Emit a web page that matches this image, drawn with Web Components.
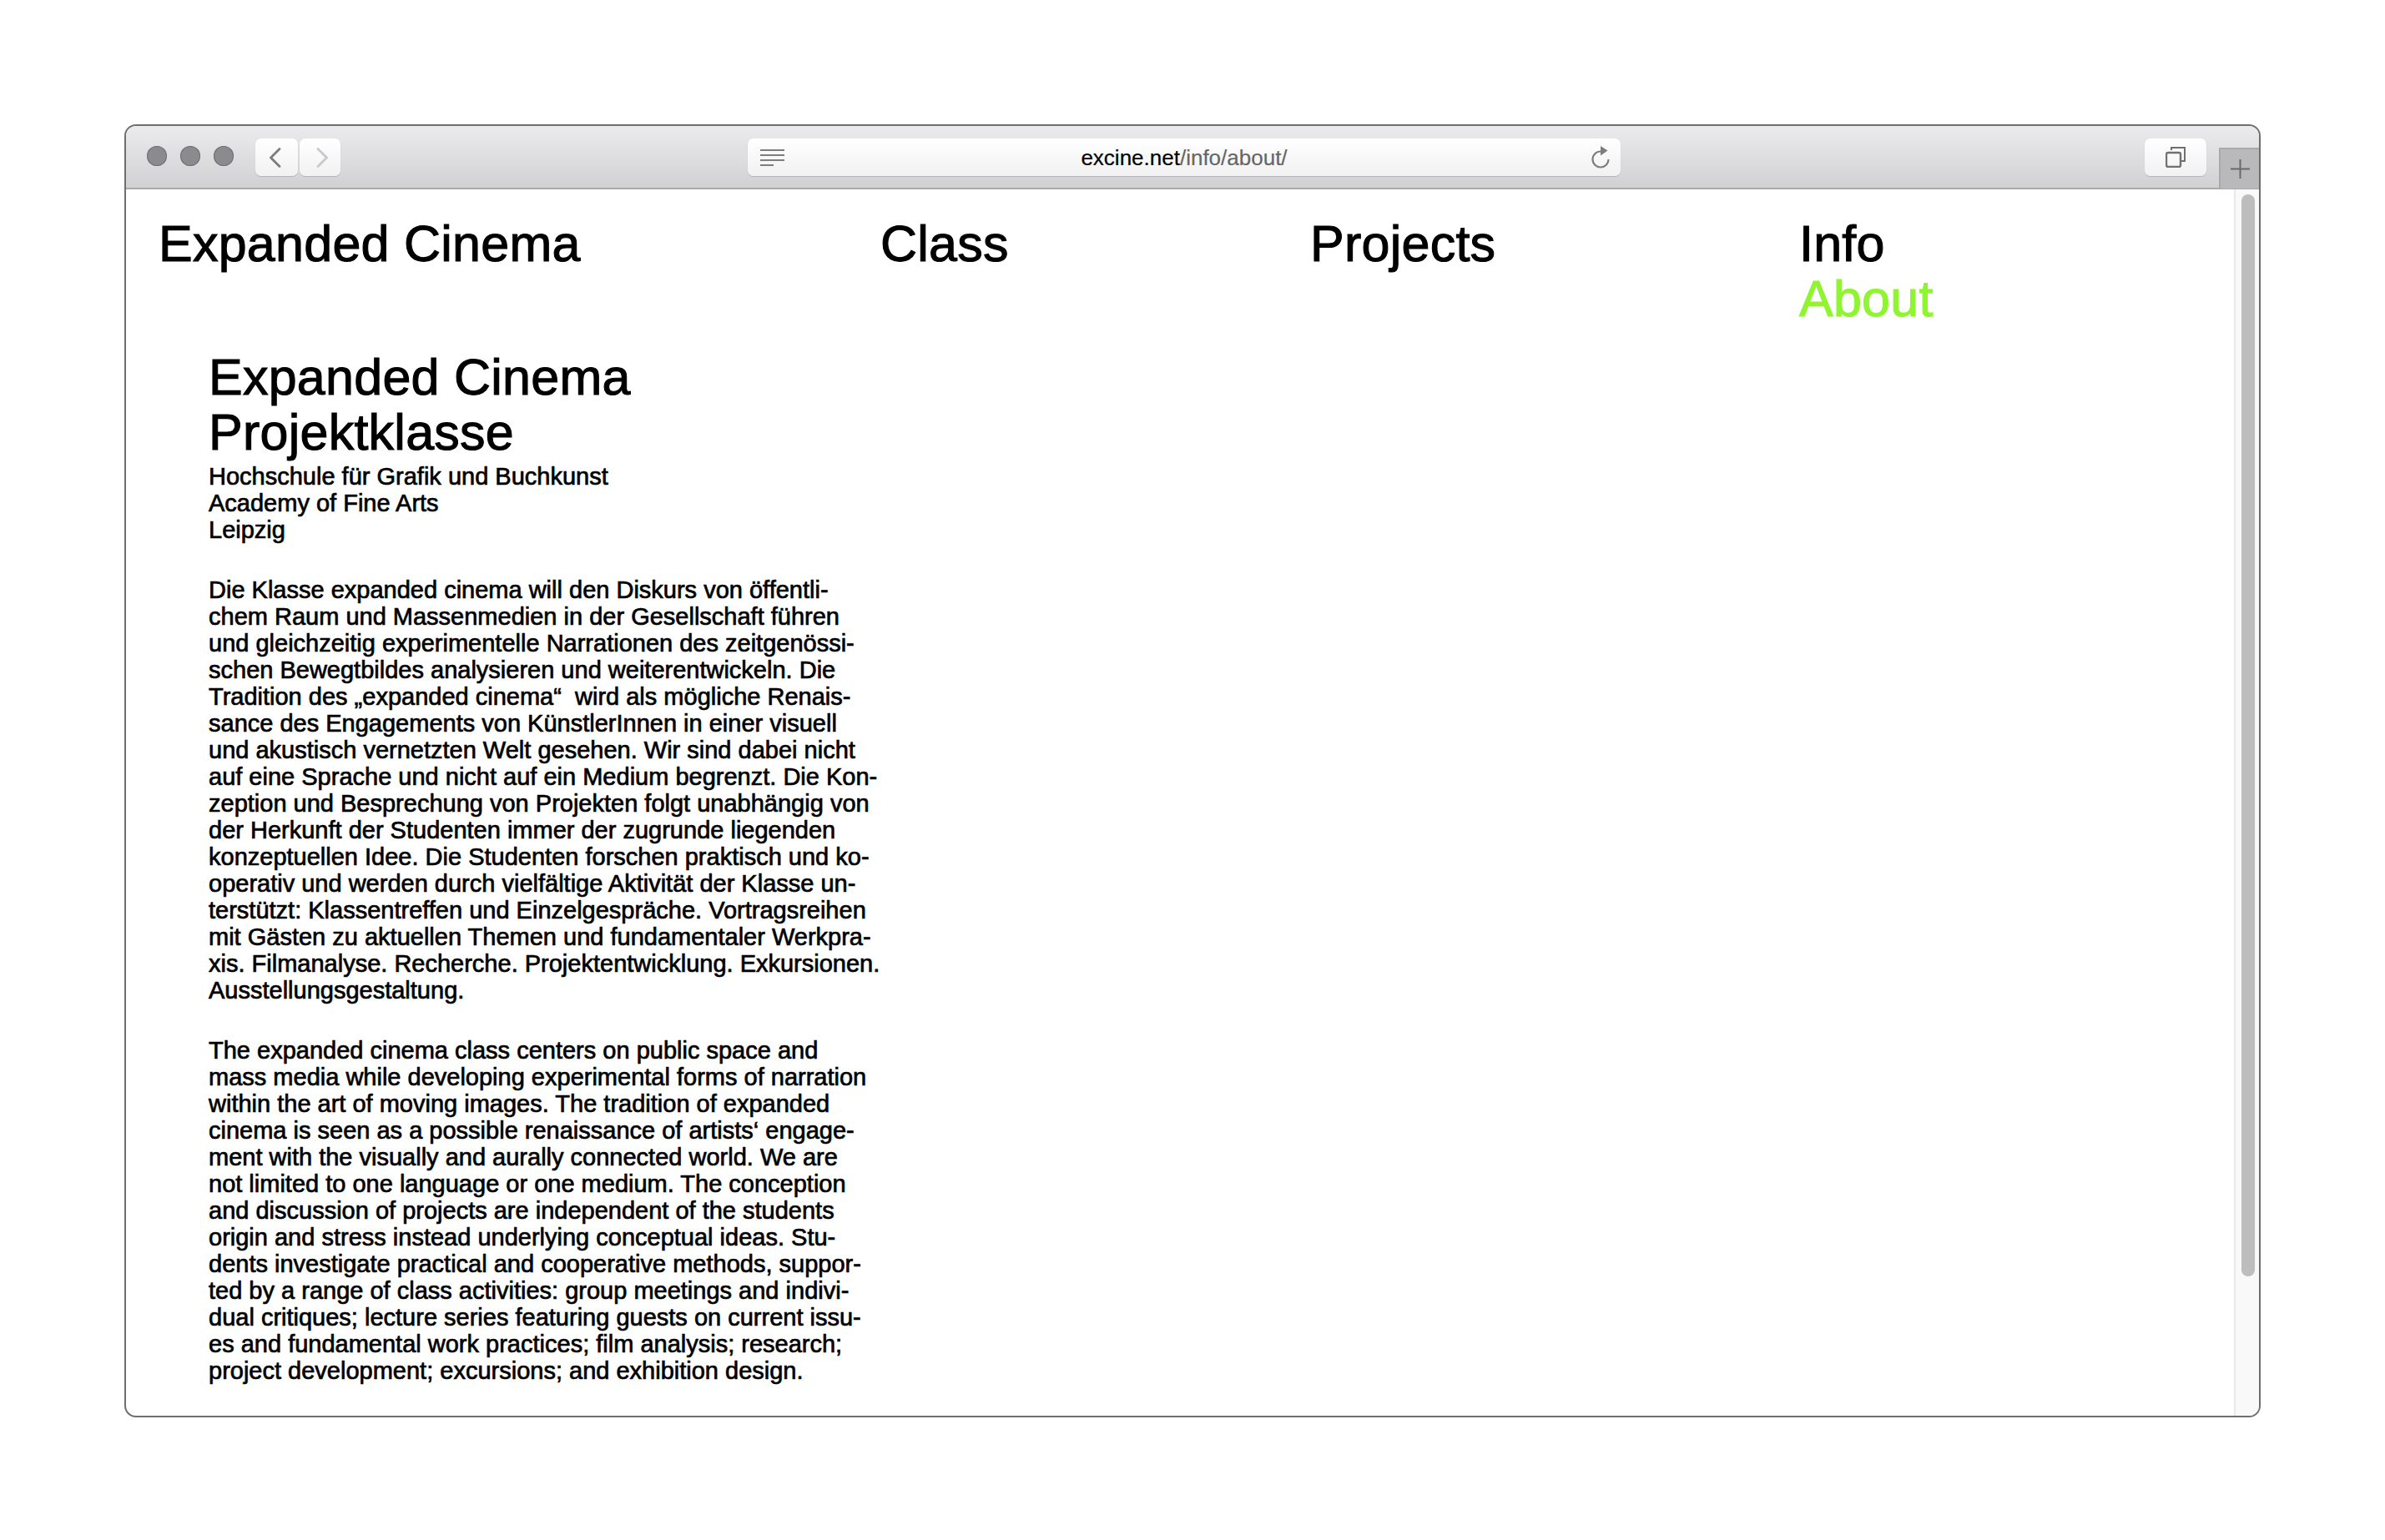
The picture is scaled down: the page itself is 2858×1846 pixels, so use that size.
<!DOCTYPE html>
<html lang="de">
<head>
<meta charset="utf-8">
<title>Expanded Cinema</title>
<style>
html, body { margin: 0; background: #fff; }
body { padding: 149px 0 0 149px; font-family: "Liberation Sans", Arial, sans-serif; color: #000; }
</style>
</head>
<body>

<browser-window>
    <browser-toolbar slot="toolbar" host-name="excine.net" path="/info/about/"></browser-toolbar>

    <site-nav>
        <nav-column width="865">Expanded Cinema</nav-column>
        <nav-column width="515">Class</nav-column>
        <nav-column width="586">Projects</nav-column>
        <nav-column>Info<span slot="sub">About</span></nav-column>
    </site-nav>

    <about-page>
        <span slot="title">Expanded Cinema<br>Projektklasse</span>
        <span slot="subtitle">Hochschule für Grafik und Buchkunst<br>Academy of Fine Arts<br>Leipzig</span>
        <text-block>Die Klasse expanded cinema will den Diskurs von öffentli-<br>chem Raum und Massenmedien in der Gesellschaft führen<br>und gleichzeitig experimentelle Narrationen des zeitgenössi-<br>schen Bewegtbildes analysieren und weiterentwickeln. Die<br>Tradition des „expanded cinema“&nbsp; wird als mögliche Renais-<br>sance des Engagements von KünstlerInnen in einer visuell<br>und akustisch vernetzten Welt gesehen. Wir sind dabei nicht<br>auf eine Sprache und nicht auf ein Medium begrenzt. Die Kon-<br>zeption und Besprechung von Projekten folgt unabhängig von<br>der Herkunft der Studenten immer der zugrunde liegenden<br>konzeptuellen Idee. Die Studenten forschen praktisch und ko-<br>operativ und werden durch vielfältige Aktivität der Klasse un-<br>terstützt: Klassentreffen und Einzelgespräche. Vortragsreihen<br>mit Gästen zu aktuellen Themen und fundamentaler Werkpra-<br>xis. Filmanalyse. Recherche. Projektentwicklung. Exkursionen.<br>Ausstellungsgestaltung.</text-block>
        <text-block>The expanded cinema class centers on public space and<br>mass media while developing experimental forms of narration<br>within the art of moving images. The tradition of expanded<br>cinema is seen as a possible renaissance of artists‘ engage-<br>ment with the visually and aurally connected world. We are<br>not limited to one language or one medium. The conception<br>and discussion of projects are independent of the students<br>origin and stress instead underlying conceptual ideas. Stu-<br>dents investigate practical and cooperative methods, suppor-<br>ted by a range of class activities: group meetings and indivi-<br>dual critiques; lecture series featuring guests on current issu-<br>es and fundamental work practices; film analysis; research;<br>project development; excursions; and exhibition design.</text-block>
    </about-page>
</browser-window>

<script>
class BrowserWindow extends HTMLElement {
    constructor() {
        super();
        this.attachShadow({ mode: 'open' });
        this.shadowRoot.innerHTML = /*html*/`
            <style>
            * { box-sizing: border-box; }
            :host {
                display: flex;
                flex-direction: column;
                box-sizing: border-box;
                width: 2560px;
                height: 1550px;
                border: 2px solid #6e6e6e;
                border-radius: 14px;
                overflow: hidden;
                background: #fff;
            }
            #body {
                flex: 1;
                display: flex;
                min-height: 0;
            }
            #content {
                flex: 1;
                min-width: 0;
            }
            #track {
                position: relative;
                width: 30px;
                background: #f9f9f9;
                border-left: 2px solid #e9e9e9;
            }
            #thumb {
                position: absolute;
                left: 7px;
                top: 6px;
                width: 16px;
                height: 1297px;
                border-radius: 8px;
                background: #bdbdbd;
            }
            </style>
            <slot name="toolbar"></slot>
            <div id="body">
                <div id="content"><slot></slot></div>
                <div id="track"><div id="thumb"></div></div>
            </div>
        `;
    }
}

class BrowserToolbar extends HTMLElement {
    constructor() {
        super();
        this.attachShadow({ mode: 'open' });
        this.shadowRoot.innerHTML = /*html*/`
            <style>
            * { box-sizing: border-box; }
            :host {
                display: flex;
                align-items: flex-start;
                box-sizing: border-box;
                height: 76px;
                padding: 15px 0 0 25px;
                background: linear-gradient(#ebeaec, #d1d0d2);
                border-bottom: 2px solid #a9a8aa;
            }
            #dots { display: flex; gap: 16px; margin-top: 9px; }
            #dots i { width: 24px; height: 24px; border-radius: 50%; background: #8b8a8f; box-shadow: inset 0 0 0 1px #6f6e73; }
            .btn {
                display: flex;
                align-items: center;
                justify-content: center;
                height: 45px;
                background: linear-gradient(#ffffff, #f1f1f2);
                border-radius: 7px;
                box-shadow: 0 1px 1px #b4b3b5;
            }
            #nav { display: flex; gap: 2px; margin-left: 26px; }
            #back { width: 51px; padding-right: 5px; }
            #forward { width: 49px; padding-left: 5px; }
            #address {
                position: relative;
                display: flex;
                align-items: center;
                justify-content: center;
                width: 1046px;
                margin-left: 488px;
                font-size: 26px;
                color: #000;
                padding-top: 2px;
                -webkit-text-stroke: 0.2px currentColor;
            }
            #address span { color: #666; }
            #list { position: absolute; left: 15px; top: 13px; }
            #reload { position: absolute; right: 12px; top: 8px; }
            #tabs { width: 74px; margin-left: 628px; }
            #plus {
                display: flex;
                align-items: center;
                justify-content: center;
                width: 48px;
                height: 49px;
                margin: 11px 0 0 15px;
                background: #b9b8ba;
                border: 2px solid #a9a8aa;
                border-width: 2px 0 0 2px;
            }
            </style>
            <div id="dots"><i></i><i></i><i></i></div>
            <div id="nav">
                <div id="back" class="btn"><svg width="15" height="24" viewBox="0 0 15 24"><path d="M13 1.5 2.5 12 13 22.5" fill="none" stroke="#7d7d7f" stroke-width="2.8" stroke-linecap="round" stroke-linejoin="round"/></svg></div>
                <div id="forward" class="btn"><svg width="15" height="24" viewBox="0 0 15 24"><path d="M2 1.5 12.5 12 2 22.5" fill="none" stroke="#c9c9ca" stroke-width="2.8" stroke-linecap="round" stroke-linejoin="round"/></svg></div>
            </div>
            <div id="address" class="btn">
                <svg id="list" width="29" height="20" viewBox="0 0 29 20"><path d="M0 1h29M0 7h29M0 13h29M0 19h16" stroke="#7d7d7f" stroke-width="2"/></svg>
                <div id="url"></div>
                <svg id="reload" width="24" height="30" viewBox="0 0 24 30"><path d="M12 7.5A9.5 9.5 0 1 0 21.5 17" fill="none" stroke="#7d7d7f" stroke-width="2.2"/><path d="M12 1l8.5 5.5L12 12.5z" fill="#7d7d7f"/></svg>
            </div>
            <div id="tabs" class="btn">
                <svg width="24" height="25" viewBox="0 0 24 25"><path d="M7 4V1h16v16h-4" fill="none" stroke="#707072" stroke-width="2"/><rect x="1" y="7" width="17" height="17" rx="2" fill="none" stroke="#707072" stroke-width="2.4"/></svg>
            </div>
            <div id="plus"><svg width="23" height="23" viewBox="0 0 23 23"><path d="M11.5 0v23M0 11.5h23" stroke="#69686a" stroke-width="2"/></svg></div>
        `;
    }

    connectedCallback() {
        let url = this.shadowRoot.getElementById('url');
        url.textContent = this.getAttribute('host-name');
        let path = document.createElement('span');
        path.textContent = this.getAttribute('path');
        url.appendChild(path);
    }
}

class SiteNav extends HTMLElement {
    constructor() {
        super();
        this.attachShadow({ mode: 'open' });
        this.shadowRoot.innerHTML = /*html*/`
            <style>
            :host {
                display: flex;
                padding: 32px 0 0 39px;
                font-size: 61px;
                letter-spacing: 0.25px;
                line-height: 66px;
                -webkit-text-stroke: 1.1px currentColor;
            }
            </style>
            <slot></slot>
        `;
    }
}

class NavColumn extends HTMLElement {
    constructor() {
        super();
        this.attachShadow({ mode: 'open' });
        this.shadowRoot.innerHTML = /*html*/`
            <style>
            :host { display: block; flex: none; }
            #sub { display: block; color: #8ef530; }
            </style>
            <div><slot></slot></div>
            <div id="sub"><slot name="sub"></slot></div>
        `;
    }

    connectedCallback() {
        if (this.hasAttribute('width')) {
            this.style.width = this.getAttribute('width') + 'px';
        }
    }
}

class AboutPage extends HTMLElement {
    constructor() {
        super();
        this.attachShadow({ mode: 'open' });
        this.shadowRoot.innerHTML = /*html*/`
            <style>
            :host {
                display: block;
                padding: 29px 0 0 99px;
            }
            #title {
                font-size: 61px;
                letter-spacing: 0.25px;
                line-height: 65.5px;
                margin-bottom: 4px;
                -webkit-text-stroke: 1.1px currentColor;
            }
            #subtitle {
                font-size: 29px;
                line-height: 32px;
                margin-bottom: 40px;
                -webkit-text-stroke: 0.7px currentColor;
            }
            </style>
            <div id="title"><slot name="title"></slot></div>
            <div id="subtitle"><slot name="subtitle"></slot></div>
            <slot></slot>
        `;
    }
}

class TextBlock extends HTMLElement {
    constructor() {
        super();
        this.attachShadow({ mode: 'open' });
        this.shadowRoot.innerHTML = /*html*/`
            <style>
            :host {
                display: block;
                margin-bottom: 40px;
                font-size: 29px;
                line-height: 32px;
                white-space: nowrap;
                -webkit-text-stroke: 0.7px currentColor;
            }
            </style>
            <slot></slot>
        `;
    }
}

window.customElements.define('browser-window', BrowserWindow);
window.customElements.define('browser-toolbar', BrowserToolbar);
window.customElements.define('site-nav', SiteNav);
window.customElements.define('nav-column', NavColumn);
window.customElements.define('about-page', AboutPage);
window.customElements.define('text-block', TextBlock);
</script>
</body>
</html>
